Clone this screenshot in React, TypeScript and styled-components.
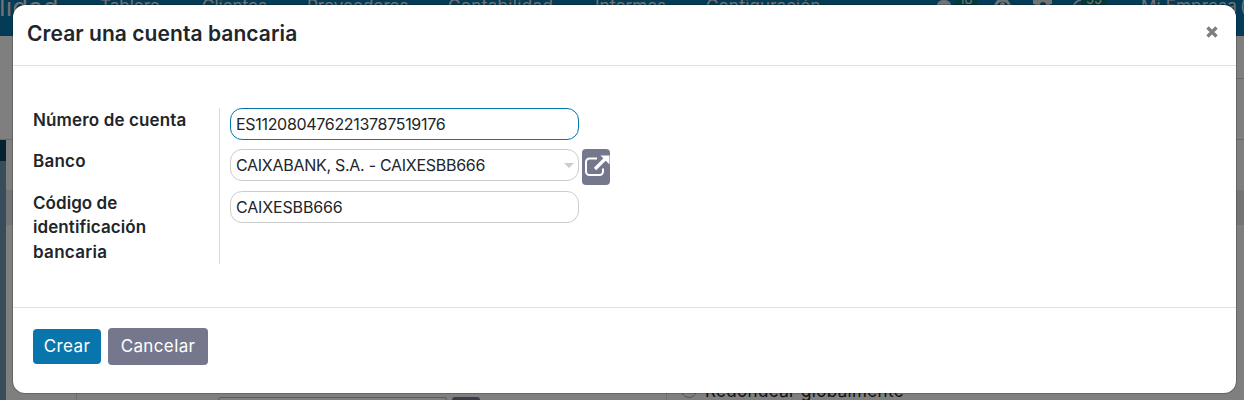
import React from "react";
import styled, { createGlobalStyle } from "styled-components";

const Global = createGlobalStyle`
  * { box-sizing: border-box; }
  html, body { margin: 0; height: 400px; overflow: hidden; }
  body { font: 16px/24px Inter, "Open Sans", sans-serif; color: #212529; background: #fff; }
  button, input { font: inherit; color: inherit; margin: 0; }
`;

const Screen = styled.div`position: relative; width: 1244px; height: 400px; overflow: hidden;`;

/* Page behind the dialog */
const Page = styled.div`display: flex; flex-direction: column; height: 400px;`;
const NavBar = styled.header`
  display: flex; flex: none; height: 36px; background: #0876ac; color: #e6e6e6; overflow: hidden; white-space: nowrap;
`;
const Brand = styled.div`
  width: 100px; display: flex; justify-content: flex-end; padding-right: 41px;
  font-size: 25px; line-height: 30px; margin-top: -8px; letter-spacing: 0.6px;
`;
const NavLink = styled.span<{ $w: number; $ls?: number }>`
  flex: none; width: ${p => p.$w}px; margin-top: -6px; font-size: 17px; letter-spacing: ${p => p.$ls ?? 0}px;
`;
const NavIcon = styled.span<{ $w: number }>`flex: none; width: ${p => p.$w}px; margin-top: -8px; svg { display: block; }`;
const Badge = styled.span<{ $w: number; $gap: number }>`
  flex: none; width: ${p => p.$w}px; height: 18px; margin: -10px ${p => p.$gap}px 0 0;
  background: #04706f; font-size: 13px; line-height: 18px; text-align: center; border-radius: 3px;
`;
const ControlPanel = styled.div`
  flex: none; height: 104px; border-bottom: 1px solid #d4d4d4;
  &::before { content: ""; display: block; margin-left: 600px; height: 42px; border-bottom: 1px solid #d4d4d4; }
`;
const Content = styled.div`flex: 1; display: flex; min-height: 0;`;
const Sidebar = styled.div`
  width: 6px; background: #6f9bb5; border-top: 21px solid #0a4564;
`;
const Settings = styled.div`flex: 1; display: flex; flex-direction: column; padding-top: 50px;`;
const SectionBand = styled.div`flex: none; height: 35px; background: #e9e9ec;`;
const Columns = styled.div`flex: 1; display: flex; align-items: stretch; padding-left: 70px;`;
const LeftColumn = styled.div`
  width: 590px; border-left: 1px solid #dcdcdc; display: flex; align-items: flex-end; padding-left: 141px; gap: 5px;
`;
const GhostField = styled.div`width: 229px; height: 3px; border: 1px solid #bbb; border-bottom: 0; border-radius: 10px 10px 0 0;`;
const GhostButton = styled.div`width: 28px; height: 3px; background: #75788d; border-radius: 3px 3px 0 0;`;
const RightColumn = styled.div`
  flex: 1; border-left: 1px solid #dcdcdc; display: flex; align-items: flex-start; padding: 154px 0 0 14px; gap: 8px; height: 175px;
  font-size: 17px; letter-spacing: 0.35px; white-space: nowrap;
`;
const Radio = styled.span`width: 16px; height: 16px; margin-top: 3px; border: 1px solid #aaa; border-radius: 50%;`;

/* Dialog */
const Backdrop = styled.div`
  position: absolute; inset: 0; background: rgba(0, 0, 0, 0.5); padding: 4px 7px 6px 12px; display: flex;
`;
const Dialog = styled.section`
  flex: 1; display: flex; flex-direction: column; background: #fff; background-clip: padding-box;
  border: 1px solid rgba(0, 0, 0, 0.2); border-radius: 13px;
`;
const DialogHeader = styled.header`
  height: 61px; flex: none; display: flex; justify-content: space-between; align-items: flex-start;
  padding: 14px 18px 0 14px; border-bottom: 1px solid #dee2e6;
`;
const Title = styled.h4`margin: 0; font-size: 21px; line-height: 30px; font-weight: 600; letter-spacing: 0.06px;`;
const Close = styled.button`border: 0; padding: 0; margin-top: 7px; background: none; svg { display: block; }`;
const Body = styled.div`height: 241px; flex: none; padding: 42px 19px 0; display: flex;`;
const Labels = styled.div`
  width: 188px; height: 156px; padding-left: 1px; border-right: 1px solid #dcdcdc; font-size: 17px; font-weight: 600;
`;
const Label = styled.label<{ $h: number }>`display: block; height: ${p => p.$h}px;`;
const Line = styled.span<{ $h?: number; $ls: number }>`
  display: block; line-height: ${p => p.$h ?? 24}px; letter-spacing: ${p => p.$ls}px;
`;
const Fields = styled.div`display: flex; flex-direction: column; padding-left: 10px; gap: 9px;`;
const FieldRow = styled.div<{ $h?: number }>`
  display: flex; gap: 3px; height: ${p => p.$h ?? 32}px; align-items: flex-start;
`;
const FieldBox = styled.div<{ $active?: boolean }>`
  width: 349px; height: 32px; display: flex; align-items: center; padding: 0 4px 0 5px;
  border: 1px solid ${p => (p.$active ? "#0876ac" : "#ccc")}; border-radius: 12px;
`;
const Input = styled.input<{ $ls: number }>`
  flex: 1; min-width: 0; border: 0; outline: 0; padding: 0; background: none; height: 24px;
  letter-spacing: ${p => p.$ls}px;
`;
const Caret = styled.span`border: 5px solid transparent; border-top-color: #ccc; border-bottom: 0;`;
const OpenButton = styled.button`
  display: flex; align-items: flex-start; width: 28px; height: 36px; flex: none; padding: 6px 0 0 2px;
  border: 0; border-radius: 4px; background: #75788d; overflow: hidden;
  svg { display: block; flex: none; }
`;
const DialogFooter = styled.footer`
  flex: 1; border-top: 1px solid #dee2e6; padding: 20px; display: flex; align-items: flex-start; gap: 7px;
`;
const Button = styled.button<{ $primary?: boolean; $w: number }>`
  width: ${p => p.$w}px; height: ${p => (p.$primary ? 35 : 37)}px; margin-top: ${p => (p.$primary ? 1 : 0)}px;
  padding: 0 0 2px; border: 0; border-radius: 4px; color: #fff; background: ${p => (p.$primary ? "#0876ac" : "#75788d")};
  font-size: 17px; letter-spacing: 0.38px;
`;

export default function App() {
  return (
    <Screen>
      <Global />
      <Page>
        <NavBar>
          <Brand>Contabilidad</Brand>
          <NavLink $w={102}>Tablero</NavLink>
          <NavLink $w={105}>Clientes</NavLink>
          <NavLink $w={141}>Proveedores</NavLink>
          <NavLink $w={147} $ls={0.35}>Contabilidad</NavLink>
          <NavLink $w={111}>Informes</NavLink>
          <NavLink $w={231} $ls={0.08}>Configuración</NavLink>
          <NavIcon $w={18}><svg width="14" height="16" fill="#e6e6e6"><path d="M7 8a7 5 0 0 1 7 5H0a7 5 0 0 1 7-5Z" /></svg></NavIcon>
          <Badge $w={22} $gap={17}>18</Badge>
          <NavIcon $w={39}><svg width="17" height="17" fill="none" stroke="#e6e6e6"><circle cx="8.5" cy="15" r="7" strokeWidth="3" /><circle cx="8.5" cy="12.5" r="2" fill="#e6e6e6" /></svg></NavIcon>
          <NavIcon $w={39}><svg width="19" height="18" fill="#e6e6e6"><path d="M0 8h5V5h8v3h6v4h-2v6h-4v-5a3 3 0 0 0-6 0v5H2v-6H0Z" /></svg></NavIcon>
          <NavIcon $w={9}><svg width="14" height="17" fill="none" stroke="#e6e6e6" strokeWidth="1.6"><path d="M9 8Q2 9 1 17" /></svg></NavIcon>
          <Badge $w={26} $gap={34}>55</Badge>
          <NavLink $w={99} $ls={0.15}>Mi Empresa</NavLink>
          <NavLink $w={20}>(</NavLink>
        </NavBar>
        <ControlPanel />
        <Content>
          <Sidebar />
          <Settings>
            <SectionBand />
            <Columns>
              <LeftColumn><GhostField /><GhostButton /></LeftColumn>
              <RightColumn><Radio /><span>Redondear globalmente</span></RightColumn>
            </Columns>
          </Settings>
        </Content>
      </Page>
      <Backdrop>
        <Dialog role="dialog" aria-label="Crear una cuenta bancaria">
          <DialogHeader>
            <Title>Crear una cuenta bancaria</Title>
            <Close aria-label="Cerrar">
              <svg width="12" height="12" stroke="#7f7f7f" strokeWidth="3.3"><path d="M1.5 1.5 10.5 10.5M10.5 1.5 1.5 10.5" /></svg>
            </Close>
          </DialogHeader>
          <Body>
            <Labels>
              <Label $h={41}><Line $ls={0.14}>Número de cuenta</Line></Label>
              <Label $h={42}><Line $ls={0.25}>Banco</Line></Label>
              <Label $h={73}>
                <Line $ls={0.05}>Código de</Line>
                <Line $ls={0.08}>identificación</Line>
                <Line $h={26} $ls={0.3}>bancaria</Line>
              </Label>
            </Labels>
            <Fields>
              <FieldRow><FieldBox $active><Input $ls={-0.31} defaultValue="ES1120804762213787519176" /></FieldBox></FieldRow>
              <FieldRow $h={33}>
                <FieldBox><Input $ls={-0.28} defaultValue="CAIXABANK, S.A. - CAIXESBB666" /><Caret /></FieldBox>
                <OpenButton aria-label="Abrir">
                  <svg width="26" height="24" fill="none" stroke="#fff">
                    <path d="M13 3.500H5.500A3.500 3.500 0 0 0 2 7V16.500A3.500 3.500 0 0 0 5.500 20H15.500A3.500 3.500 0 0 0 19 16.500V13.500" strokeWidth="2" />
                    <path d="M11 14 21 4" strokeWidth="3.200" />
                    <path d="M16.500 0.500H25.500V9.500Z" fill="#fff" stroke="none" />
                  </svg>
                </OpenButton>
              </FieldRow>
              <FieldRow><FieldBox><Input $ls={-0.15} defaultValue="CAIXESBB666" /></FieldBox></FieldRow>
            </Fields>
          </Body>
          <DialogFooter>
            <Button $primary $w={68}>Crear</Button>
            <Button $w={100}>Cancelar</Button>
          </DialogFooter>
        </Dialog>
      </Backdrop>
    </Screen>
  );
}
